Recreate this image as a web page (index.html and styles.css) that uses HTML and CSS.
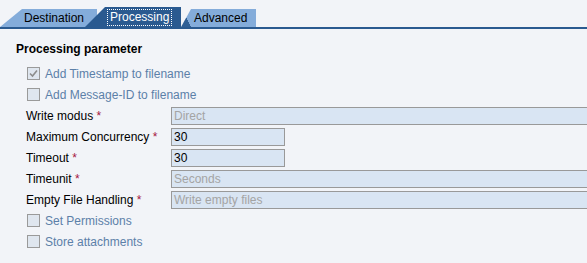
FILE: index.html
```
<!DOCTYPE html>
<html>
<head>
<meta charset="utf-8">
<link rel="stylesheet" href="styles.css">
</head>
<body>
<div class="tabs">
  <div class="tab tab-dest">Destination</div>
  <div class="tab tab-proc"><span class="focus">Processing</span></div>
  <div class="tab tab-adv">Advanced</div>
</div>
<div class="content">
  <div class="section-title">Processing parameter</div>
  <div class="form">
    <div class="check-row">
      <span class="cb checked"><svg width="11" height="11" viewBox="0 0 11 11"><path d="M2 5.5 L4.5 8 L9 2.5" fill="none" stroke="#8c8c8c" stroke-width="1.6"/></svg></span>
      <span class="cb-label">Add Timestamp to filename</span>
    </div>
    <div class="check-row">
      <span class="cb"></span>
      <span class="cb-label">Add Message-ID to filename</span>
    </div>
    <div class="field-row">
      <span class="label">Write modus <span class="req">*</span></span>
      <span class="input wide disabled">Direct</span>
    </div>
    <div class="field-row">
      <span class="label">Maximum Concurrency <span class="req">*</span></span>
      <span class="input short">30</span>
    </div>
    <div class="field-row">
      <span class="label">Timeout <span class="req">*</span></span>
      <span class="input short">30</span>
    </div>
    <div class="field-row">
      <span class="label">Timeunit <span class="req">*</span></span>
      <span class="input wide disabled">Seconds</span>
    </div>
    <div class="field-row">
      <span class="label">Empty File Handling <span class="req">*</span></span>
      <span class="input wide disabled">Write empty files</span>
    </div>
    <div class="check-row">
      <span class="cb"></span>
      <span class="cb-label">Set Permissions</span>
    </div>
    <div class="check-row">
      <span class="cb"></span>
      <span class="cb-label">Store attachments</span>
    </div>
  </div>
</div>
</body>
</html>
```
FILE: styles.css
```
html, body {
  margin: 0;
  padding: 0;
  background: #f2f4f8;
  overflow: hidden;
}
body {
  font-family: "Liberation Sans", Arial, sans-serif;
  font-size: 12px;
  color: #000;
  width: 587px;
  height: 263px;
}
.tabs {
  display: flex;
  align-items: flex-end;
  height: 27px;
  border-bottom: 2px solid #2a5a90;
}
.tab {
  position: relative;
  height: 18px;
  line-height: 18px;
  background: #84acda;
  color: #000;
  box-sizing: border-box;
  white-space: nowrap;
}
.tab-dest {
  width: 97px;
  padding-left: 24px;
  clip-path: polygon(0 100%, 22px 0, 100% 0, 100% 100%);
}
.tab-proc {
  width: 96px;
  height: 20px;
  margin-left: -12px;
  padding-left: 22px;
  padding-top: 1px;
  background: #2a5a90;
  color: #fff;
  z-index: 2;
  clip-path: polygon(0 100%, 20px 0, 100% 0, 100% 100%);
}
.focus {
  display: inline-block;
  height: 15px;
  line-height: 15px;
  padding: 0 2px;
  border: 1px dotted #fff;
}
.tab-adv {
  width: 75px;
  padding-left: 13px;
  background: linear-gradient(63deg, #2f5f95 0, #2f5f95 9px, #84acda 9px);
  clip-path: polygon(0 100%, 10px 0, 100% 0, 100% 100%);
}
.content {
  padding: 12px 0 0 16px;
}
.section-title {
  font-weight: bold;
  line-height: 16px;
  margin-bottom: 6px;
}
.form {
  display: flex;
  flex-direction: column;
}
.check-row {
  display: flex;
  align-items: center;
  height: 21px;
  padding-left: 11px;
}
.cb {
  width: 13px;
  height: 13px;
  box-sizing: border-box;
  border: 1px solid #9a9a9a;
  background: #dfe6ef;
  display: inline-flex;
  align-items: center;
  justify-content: center;
  margin-right: 5px;
}
.cb-label {
  color: #5c80a8;
}
.field-row {
  display: grid;
  grid-template-columns: 145px 1fr;
  align-items: center;
  height: 21px;
  padding-left: 10px;
}
.label {
  white-space: nowrap;
}
.req {
  color: #a5173f;
}
.input {
  display: block;
  height: 18px;
  line-height: 16px;
  box-sizing: border-box;
  border: 1px solid #999;
  background: #d9e5f3;
  padding-left: 2px;
  color: #000;
  white-space: nowrap;
}
.short {
  width: 114px;
}
.wide {
  width: calc(100% + 4px);
}
.disabled {
  color: #a4a4a4;
}
```
